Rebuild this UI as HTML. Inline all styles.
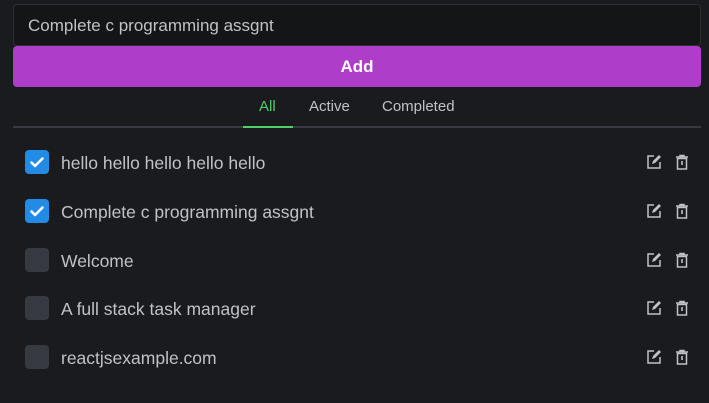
<html><head><style>
body{margin:0;background:#1a1b1e;width:709px;height:403px;font-family:"Liberation Sans",sans-serif;position:relative;overflow:hidden}
.inp{position:absolute;left:13px;top:4px;background:#141517;border:1px solid #2c2e33;border-radius:4px;color:#c1c2c5;font-size:17px;line-height:42px;padding-left:14px;box-sizing:border-box;width:688px;height:42px}
.btn{position:absolute;left:13px;top:46px;width:688px;height:41px;background:#ae3ec9;border-radius:4px;color:#fff;font-weight:bold;font-size:17px;text-align:center;line-height:42px}
.line{position:absolute;left:13px;top:126px;width:688px;height:2px;background:#373a40}
.tab{position:absolute;top:98px;font-size:15px;color:#c1c2c5}
.ul{position:absolute;left:243px;top:126px;width:50px;height:2px;background:#51cf66}
.row{position:absolute;left:25px;height:24px;width:670px}
.cb{position:absolute;left:0;top:0;width:24px;height:24px;border-radius:4px;background:#373a40}
.cb.on{background:#228be6}
.t{position:absolute;left:36px;top:3px;font-size:17.5px;color:#c1c2c5}
.ic{position:absolute;top:4px}
</style></head><body>
<div class="inp">Complete c programming assgnt</div>
<div class="btn">Add</div>
<div class="line"></div><div class="ul"></div>
<div class="tab" style="left:259px;color:#51cf66">All</div>
<div class="tab" style="left:309px">Active</div>
<div class="tab" style="left:382px">Completed</div>
<div id="rows"></div>
<script>
var items=[["hello hello hello hello hello",1,150],["Complete c programming assgnt",1,199],["Welcome",0,248],["A full stack task manager",0,296],["reactjsexample.com",0,345]];
var h="";
items.forEach(function(i){
h+='<div class="row" style="top:'+i[2]+'px"><div class="cb'+(i[1]?' on':'')+'">'+(i[1]?'<svg width="24" height="24"><path d="M6.5 12.5l3.5 3.5 7.5-7.5" stroke="#fff" stroke-width="2.6" fill="none" stroke-linecap="round" stroke-linejoin="round"/></svg>':'')+'</div><div class="t">'+i[0]+'</div>'+
'<svg class="ic" style="left:621px" width="16" height="16"><path d="M8 2H2v12h12V8" stroke="#c1c2c5" stroke-width="1.5" fill="none"/><path d="M6 10l1-3 6-6 2 2-6 6z" fill="#c1c2c5"/></svg>'+
'<svg class="ic" style="left:649px" width="16" height="16"><path d="M2 3h12M6 3V1.5h4V3" stroke="#c1c2c5" stroke-width="1.5" fill="none"/><path d="M3.5 4.5h9V15h-9z" stroke="#c1c2c5" stroke-width="1.5" fill="none"/><path d="M8 7v4" stroke="#c1c2c5" stroke-width="1.6"/></svg></div>';
});
document.getElementById("rows").innerHTML=h;
</script>
</body></html>
